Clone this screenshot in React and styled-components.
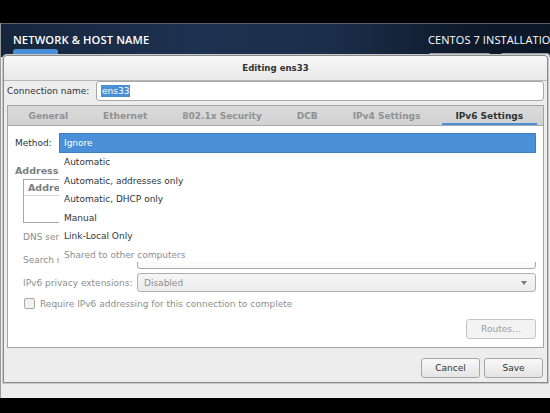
import React from "react";
import styled, { createGlobalStyle } from "styled-components";

const Global = createGlobalStyle`
  html, body { margin: 0; padding: 0; background: #000; }
  #root { width: 550px; height: 413px; overflow: hidden; }
  * { box-sizing: border-box; }
`;

const Screen = styled.div`
  width: 550px;
  height: 413px;
  background: #000;
  display: flex;
  flex-direction: column;
  font-family: "DejaVu Sans", sans-serif;
  font-size: 9px;
  color: #2e3436;
`;

const BlackBand = styled.div`
  height: ${(p) => p.$h}px;
  flex: none;
  background: #000;
`;

const Installer = styled.div`
  position: relative;
  flex: 1;
  background: #ededed;
  border-left: 1px solid #9a9a9a;
  display: flex;
  flex-direction: column;
`;

const Header = styled.div`
  height: 34px;
  flex: none;
  overflow: hidden;
  background: linear-gradient(90deg, #16263d 0%, #1d3150 35%, #1b2e4a 60%, #0e1a2b 85%, #0c1726 100%);
  border-top: 1px solid #5a6270;
  display: flex;
  justify-content: space-between;
  padding-top: 9px;
`;

const HeaderSide = styled.div`
  display: flex;
  flex-direction: column;
  padding-left: ${(p) => p.$pl}px;
  width: ${(p) => p.$w}px;
  white-space: nowrap;
  overflow: hidden;
`;

const HeaderTitle = styled.div`
  font-family: "Open Sans", sans-serif;
  font-weight: ${(p) => (p.$bold ? 600 : 400)};
  font-size: ${(p) => (p.$bold ? 11.2 : 11)}px;
  line-height: 14px;
  color: #fff;
  letter-spacing: 0.1px;
`;

const DoneButton = styled.div`
  margin-top: 2px;
  width: 45px;
  height: 10px;
  background: #4a90d9;
  border-radius: 3px 3px 0 0;
`;

const HeaderBoxes = styled.div`
  display: flex;
  gap: 9px;
  margin-top: 6px;
`;

const HeaderBox = styled.div`
  width: ${(p) => p.$w}px;
  height: 10px;
  background: #f4f4f4;
  border: 1px solid #9aa0a8;
  border-radius: 3px 3px 0 0;
`;

const Dialog = styled.div`
  position: absolute;
  left: 2px;
  top: 32px;
  width: 545px;
  height: 328px;
  background: #ededed;
  border: 1px solid #8a8a8a;
  border-radius: 4px 4px 0 0;
  box-shadow: 0 0 0 1px #c8c8c8;
  display: flex;
  flex-direction: column;
`;

const TitleBar = styled.div`
  height: 25px;
  flex: none;
  background: linear-gradient(#f8f8f8, #e8e8e8);
  border-bottom: 1px solid #b6b6b6;
  border-radius: 4px 4px 0 0;
  display: flex;
  align-items: center;
  justify-content: center;
  font-weight: bold;
  font-size: 8.6px;
  color: #2e3436;
`;

const DialogBody = styled.div`
  flex: 1;
  display: flex;
  flex-direction: column;
  padding: 0 3px 0 3px;
`;

const NameRow = styled.div`
  height: 20px;
  display: flex;
  align-items: center;
`;

const NameLabel = styled.div`
  width: 89px;
  flex: none;
`;

const Entry = styled.div`
  flex: ${(p) => (p.$flex ? 1 : "none")};
  height: ${(p) => p.$h || 19}px;
  background: ${(p) => (p.$dim ? "#fafafa" : "#fff")};
  border: 1px solid #a8a8a8;
  border-radius: 3px;
  display: flex;
  align-items: center;
  padding-left: 4px;
`;

const Selected = styled.span`
  background: #4a90d9;
  color: #fff;
  padding: 0 1px;
  line-height: 12px;
`;

const Notebook = styled.div`
  margin-top: 4px;
  flex: 1;
  border: 1px solid #a4a4a4;
  display: flex;
  flex-direction: column;
  background: #fff;
`;

const TabStrip = styled.div`
  height: 20px;
  flex: none;
  background: linear-gradient(#dadada, #d2d2d2);
  border-bottom: 1px solid #a9a9a9;
  display: flex;
  padding-left: 3px;
`;

const Tab = styled.div`
  margin: 0 4px;
  padding: 0 13.5px;
  display: flex;
  align-items: center;
  font-weight: bold;
  font-size: 9px;
  color: ${(p) => (p.$active ? "#2e3436" : "#8e9192")};
  border-bottom: 2px solid ${(p) => (p.$active ? "#4a90d9" : "transparent")};
  padding-top: 2px;
  white-space: nowrap;
`;

const Page = styled.div`
  flex: 1;
  position: relative;
  padding: 7px 7px 0 7px;
  display: flex;
  flex-direction: column;
`;

const MethodRow = styled.div`
  height: 19px;
  display: flex;
  align-items: center;
`;

const MethodLabel = styled.div`
  width: 44px;
  flex: none;
`;

const SectionLabel = styled.div`
  margin-top: 12px;
  height: 14px;
  line-height: 14px;
  width: 44px;
  overflow: hidden;
  white-space: nowrap;
  font-weight: bold;
  font-size: 9.5px;
  color: #7b7e7f;
`;

const Indented = styled.div`
  margin-left: 8px;
  display: flex;
  flex-direction: column;
`;

const AddressBox = styled.div`
  margin-top: 1px;
  height: 44px;
  border: 1px solid #a8a8a8;
  background: #fff;
`;

const AddressHead = styled.div`
  height: 16px;
  border-bottom: 1px solid #d8d8d8;
  padding-left: 4px;
  display: flex;
  align-items: center;
  font-weight: bold;
  color: #7b7e7f;
  font-size: 9.5px;
`;

const HeadText = styled.span`
  width: 31px;
  overflow: hidden;
  white-space: nowrap;
`;

const FieldRows = styled.div`
  margin-top: 4px;
  display: flex;
  flex-direction: column;
  gap: 4px;
`;

const FieldRow = styled.div`
  display: grid;
  grid-template-columns: 114px 1fr;
  align-items: center;
  height: 19px;
`;

const GrayLabel = styled.div`
  color: #8b8e8f;
  white-space: nowrap;
  overflow: hidden;
  max-width: ${(p) => (p.$clip ? "36px" : "none")};
`;

const Combo = styled.div`
  height: 19px;
  background: linear-gradient(#f6f6f6, #ececec);
  border: 1px solid #b0b0b0;
  border-radius: 3px;
  display: flex;
  align-items: center;
  justify-content: space-between;
  padding: 0 8px 0 6px;
  color: ${(p) => (p.$dim ? "#8b8e8f" : "#2e3436")};
  flex: ${(p) => (p.$flex ? 1 : "none")};
`;

const Arrow = styled.span`
  width: 0;
  height: 0;
  margin-left: auto;
  border-left: 3px solid transparent;
  border-right: 3px solid transparent;
  border-top: 4px solid #7a7a7a;
`;

const CheckRow = styled.div`
  margin-top: 5px;
  margin-left: 1px;
  height: 13px;
  display: flex;
  align-items: center;
  gap: 5px;
  color: #8b8e8f;
`;

const CheckBox = styled.span`
  width: 11px;
  height: 11px;
  border: 1px solid #a8a8a8;
  border-radius: 2px;
  background: #f2f2f2;
`;

const RightRow = styled.div`
  margin-top: 9px;
  display: flex;
  justify-content: flex-end;
`;

const Button = styled.div`
  width: ${(p) => p.$w}px;
  height: 20px;
  border: 1px solid ${(p) => (p.$dim ? "#c4c4c4" : "#a6a6a6")};
  border-radius: 3px;
  background: ${(p) => (p.$dim ? "#f3f3f3" : "linear-gradient(#f8f8f8, #e4e4e4)")};
  color: ${(p) => (p.$dim ? "#9a9c9d" : "#2e3436")};
  display: flex;
  align-items: center;
  justify-content: center;
`;

const ActionArea = styled.div`
  height: 34px;
  flex: none;
  padding: 10px 1px 4px 0;
  display: flex;
  justify-content: flex-end;
  gap: 4px;
`;

const Menu = styled.div`
  position: absolute;
  left: 51px;
  top: 7px;
  width: 477px;
  height: 129px;
  background: #fff;
  display: flex;
  flex-direction: column;
`;

const MenuItem = styled.div`
  height: ${(p) => (p.$active ? 20 : 18.5)}px;
  flex: none;
  display: flex;
  align-items: center;
  padding-left: 4px;
  background: ${(p) => (p.$active ? "#4a8fd8" : "transparent")};
  border: 1px solid ${(p) => (p.$active ? "#3d7ec6" : "transparent")};
  color: ${(p) => (p.$active ? "#fff" : p.$dim ? "#8b8e8f" : "#2e3436")};
`;

const tabs = ["General", "Ethernet", "802.1x Security", "DCB", "IPv4 Settings", "IPv6 Settings"];
const methods = [
  "Ignore",
  "Automatic",
  "Automatic, addresses only",
  "Automatic, DHCP only",
  "Manual",
  "Link-Local Only",
  "Shared to other computers",
];

export default function App() {
  return (
    <>
      <Global />
      <Screen>
        <BlackBand $h={23} />
        <Installer>
          <Header>
            <HeaderSide $pl={12} $w={250}>
              <HeaderTitle $bold>NETWORK &amp; HOST NAME</HeaderTitle>
              <DoneButton />
            </HeaderSide>
            <HeaderSide $pl={0} $w={122}>
              <HeaderTitle>CENTOS 7 INSTALLATION</HeaderTitle>
              <HeaderBoxes>
                <HeaderBox $w={76} />
                <HeaderBox $w={60} />
              </HeaderBoxes>
            </HeaderSide>
          </Header>
          <Dialog>
            <TitleBar>Editing ens33</TitleBar>
            <DialogBody>
              <NameRow>
                <NameLabel>Connection name:</NameLabel>
                <Entry $flex $h={20}>
                  <Selected>ens33</Selected>
                </Entry>
              </NameRow>
              <Notebook>
                <TabStrip>
                  {tabs.map((t) => (
                    <Tab key={t} $active={t === "IPv6 Settings"}>
                      {t}
                    </Tab>
                  ))}
                </TabStrip>
                <Page>
                  <MethodRow>
                    <MethodLabel>Method:</MethodLabel>
                    <Combo $flex>
                      <Arrow />
                    </Combo>
                  </MethodRow>
                  <SectionLabel>Addresses</SectionLabel>
                  <Indented>
                    <AddressBox>
                      <AddressHead>
                        <HeadText>Address</HeadText>
                      </AddressHead>
                    </AddressBox>
                    <FieldRows>
                      <FieldRow>
                        <GrayLabel $clip>DNS servers:</GrayLabel>
                        <Entry $dim />
                      </FieldRow>
                      <FieldRow>
                        <GrayLabel $clip>Search domains:</GrayLabel>
                        <Entry $dim />
                      </FieldRow>
                      <FieldRow>
                        <GrayLabel>IPv6 privacy extensions:</GrayLabel>
                        <Combo $dim>
                          Disabled
                          <Arrow />
                        </Combo>
                      </FieldRow>
                    </FieldRows>
                    <CheckRow>
                      <CheckBox />
                      Require IPv6 addressing for this connection to complete
                    </CheckRow>
                  </Indented>
                  <RightRow>
                    <Button $w={70} $dim>
                      Routes…
                    </Button>
                  </RightRow>
                  <Menu>
                    {methods.map((m, i) => (
                      <MenuItem key={m} $active={i === 0} $dim={i === methods.length - 1}>
                        {m}
                      </MenuItem>
                    ))}
                  </Menu>
                </Page>
              </Notebook>
              <ActionArea>
                <Button $w={59}>Cancel</Button>
                <Button $w={59}>Save</Button>
              </ActionArea>
            </DialogBody>
          </Dialog>
        </Installer>
        <BlackBand $h={15} />
      </Screen>
    </>
  );
}
